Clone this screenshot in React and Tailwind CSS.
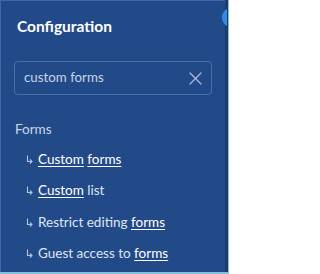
import React from "react";

function Arrow() {
  return (
    <svg width="7" height="9" viewBox="0 0 7 9" fill="none" stroke="#b3c4e0" strokeWidth="1.1" className="mr-[5px] mt-[1px]">
      <path d="M1.5 0.5V6.5H6" />
      <path d="M4 4.5L6 6.5L4 8.5" />
    </svg>
  );
}

function Item({ children }) {
  return (
    <div className="flex items-center h-[31.5px] pl-[25px] text-[13.5px] text-[#dde6f3]">
      <Arrow />
      <span>{children}</span>
    </div>
  );
}

function U({ children }) {
  return <span className="underline underline-offset-[2px] decoration-1 text-white">{children}</span>;
}

export default function App() {
  return (
    <div className="w-[229px] h-[274px] relative overflow-hidden bg-[#7fc0de]" style={{ fontFamily: "Lato, 'Noto Sans', sans-serif" }}>
      <div className="flex h-[272px]">
        <div className="w-[225px] h-full bg-[#234a88] border-l border-t border-[#3f68a6] flex flex-col">
          <div className="pl-[16px] pt-[15px] h-[35px] text-[15.5px] font-bold text-white leading-[20px]">Configuration</div>
          <div className="mt-[25px] mx-[13px] h-[34px] border border-[#4a70aa] rounded-[4px] flex items-center justify-between pl-[9px] pr-[9px]">
            <span className="text-[13.3px] text-[#c9d4e8]">custom forms</span>
            <svg width="13" height="13" viewBox="0 0 13 13" fill="none" stroke="#a7bbdc" strokeWidth="1.3" strokeLinecap="round">
              <path d="M1 1L12 12M12 1L1 12" />
            </svg>
          </div>
          <div className="pl-[14px] mt-[24px] text-[13.5px] text-[#cad7ea] leading-[20px]">Forms</div>
          <div className="mt-[4px]">
            <Item><U>Custom</U> <U>forms</U></Item>
            <Item><U>Custom</U> list</Item>
            <Item>Restrict editing <U>forms</U></Item>
            <Item>Guest access to <U>forms</U></Item>
          </div>
        </div>
        <div className="w-[3px] h-full bg-[#1c3c74]"></div>
        <div className="w-[1px] h-full bg-[#7fc0de]"></div>
      </div>
      <div className="absolute left-[222px] top-[8px] w-[18px] h-[19px] rounded-full bg-[#2e8ce4]" style={{ clipPath: "inset(0 13px 0 0)" }}></div>
    </div>
  );
}
